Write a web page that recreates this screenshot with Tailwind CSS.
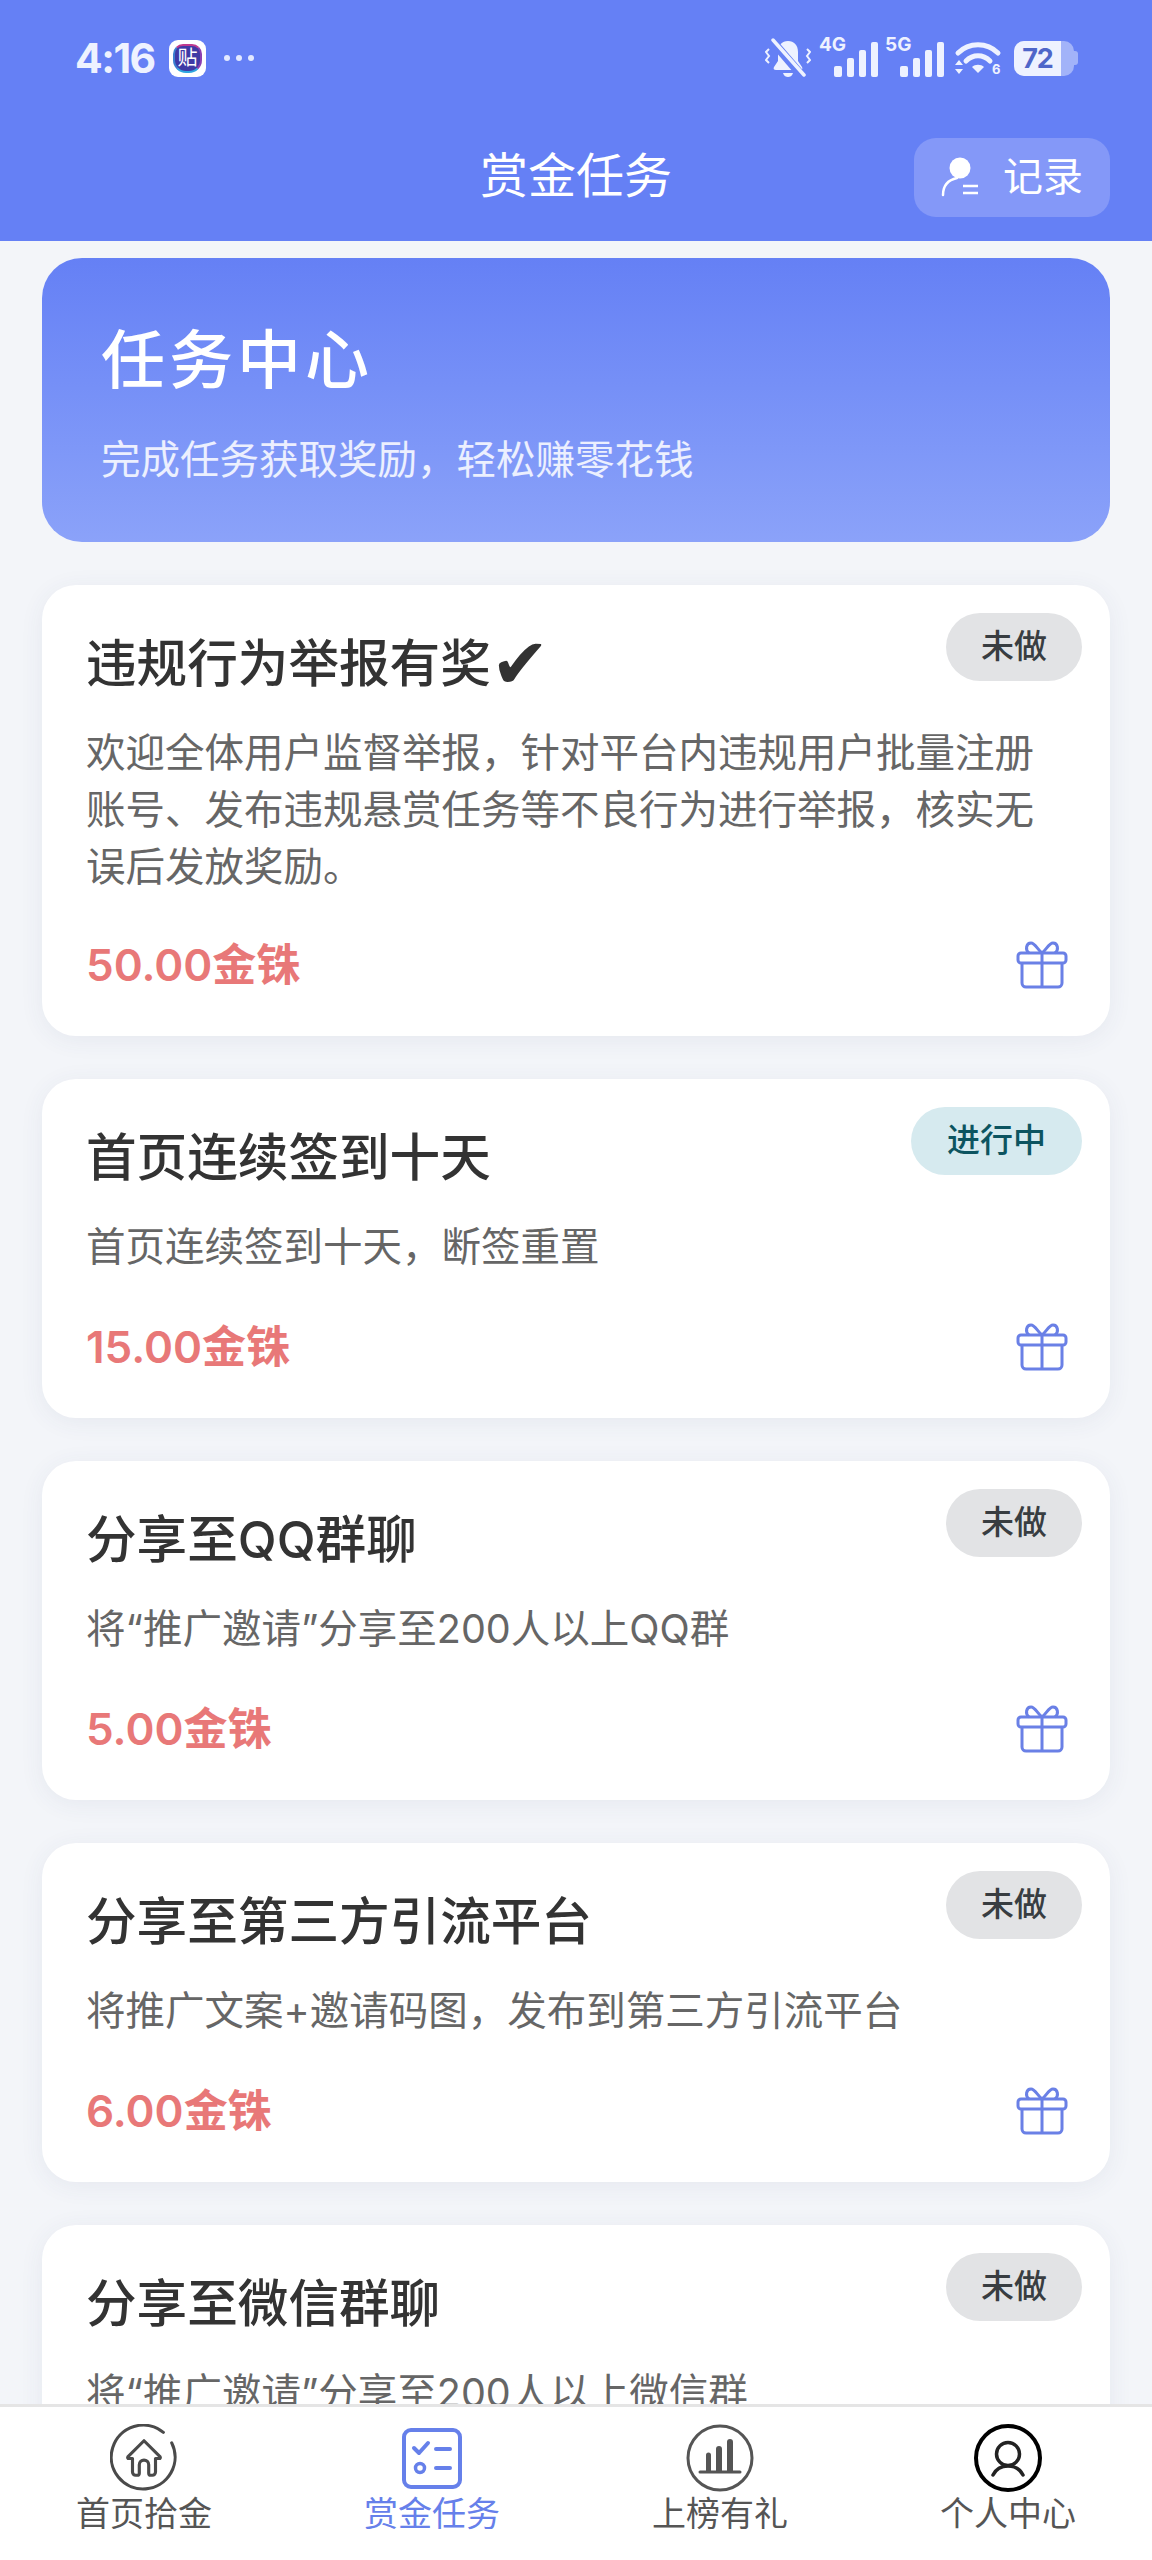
<!DOCTYPE html>
<html lang="zh-CN">
<head>
    <meta charset="UTF-8">
    <meta name="viewport" content="width=device-width, initial-scale=1.0">
    <title>赏金任务</title>
    <script src="https://cdn.jsdelivr.net/npm/@tailwindcss/browser@4"></script>
</head>
<body class="bg-[#f3f5f9] font-['Inter','Noto_Sans_CJK_SC',sans-serif]">
<div class="flex flex-col w-[1152px] h-[2560px] overflow-hidden">

    <!-- Header -->
    <header class="shrink-0 h-[241px] bg-[#6580f5] text-white">
        <!-- Status bar -->
        <div class="flex items-center justify-between h-[116px] pl-[75px] pr-[74px] text-[#eef2ff]">
            <div class="flex items-center">
                <span class="w-[78px] text-[41px] leading-none font-bold tracking-[-1.5px]">4:16</span>
                <span class="ml-[16px] flex items-center justify-center w-[37px] h-[37px] bg-white rounded-[9px]">
                    <span class="flex items-center justify-center w-[29px] h-[29px] rounded-t-[10px] rounded-b-[13px] bg-[#3f3aa5] border-2 border-t-[#c0398f] border-r-[#8b3fb0] border-b-[#2fa6e0] border-l-[#3a7fd0] text-[20px] leading-none text-white">贴</span>
                </span>
                <span class="ml-[18px] flex gap-[6px]">
                    <i class="block w-[6px] h-[6px] rounded-full bg-[#e3e9ff]"></i>
                    <i class="block w-[6px] h-[6px] rounded-full bg-[#e3e9ff]"></i>
                    <i class="block w-[6px] h-[6px] rounded-full bg-[#e3e9ff]"></i>
                </span>
            </div>
            <div class="flex items-center">
                <!-- muted bell -->
                <svg class="w-[46px] h-[40px]" viewBox="0 0 46 40" fill="none">
                    <path d="M13 23V14C13 7 17 3 23 3s10 4 10 11v9l4 6c1 2 0 3-2 3H11c-2 0-3-1-2-3z" fill="#eef2ff"/>
                    <path d="M18 35h10c-1 3-3 4-5 4s-4-1-5-4z" fill="#eef2ff"/>
                    <path d="M6 3l31 36" stroke="#6580f5" stroke-width="7"/>
                    <path d="M9 1l31 36" stroke="#6580f5" stroke-width="3"/>
                    <path d="M8 2l31 35" stroke="#eef2ff" stroke-width="3.500" stroke-linecap="round"/>
                    <path d="M4 11l-3 3 3 4-3 4 3 3M42 11l3 3-3 4 3 4-3 3" stroke="#eef2ff" stroke-width="2" fill="none"/>
                </svg>
                <!-- 4G signal -->
                <span class="relative ml-[8px] flex items-end gap-[5px] w-[59px] h-[38px] pl-[15px]">
                    <b class="absolute left-0 top-[-4px] text-[19px] leading-[20px] font-bold">4G</b>
                    <i class="block w-[8px] h-[11px] rounded-[2px] bg-[#eef2ff]"></i>
                    <i class="block w-[7px] h-[19px] rounded-[2px] bg-[#eef2ff]"></i>
                    <i class="block w-[7px] h-[27px] rounded-[2px] bg-[#eef2ff]"></i>
                    <i class="block w-[7px] h-[35px] rounded-[2px] bg-[#eef2ff]"></i>
                </span>
                <!-- 5G signal -->
                <span class="relative ml-[7px] flex items-end gap-[5px] w-[59px] h-[38px] pl-[15px]">
                    <b class="absolute left-0 top-[-4px] text-[19px] leading-[20px] font-bold">5G</b>
                    <i class="block w-[8px] h-[11px] rounded-[2px] bg-[#eef2ff]"></i>
                    <i class="block w-[7px] h-[19px] rounded-[2px] bg-[#eef2ff]"></i>
                    <i class="block w-[7px] h-[27px] rounded-[2px] bg-[#eef2ff]"></i>
                    <i class="block w-[7px] h-[35px] rounded-[2px] bg-[#eef2ff]"></i>
                </span>
                <!-- wifi -->
                <svg class="ml-[11px] w-[46px] h-[34px] overflow-visible" viewBox="0 0 46 34" fill="none">
                    <path d="M3 12C14 1 32 1 43 12" stroke="#eef2ff" stroke-width="5" stroke-linecap="round"/>
                    <path d="M11 20c7-7 17-7 24 0" stroke="#eef2ff" stroke-width="5" stroke-linecap="round"/>
                    <path d="M17 26c3-3 9-3 12 0l-6 6z" fill="#eef2ff"/>
                    <path d="M4 19l4 5H0zM4 33l4-5H0z" fill="#eef2ff"/>
                    <text x="37" y="33" font-size="13" font-weight="700" font-family="Inter" fill="#eef2ff">6</text>
                </svg>
                <!-- battery -->
                <span class="ml-[13px] flex items-center">
                    <span class="flex w-[60px] h-[35px] rounded-[10px] overflow-hidden bg-white/40">
                        <span class="flex items-center justify-center w-[47px] bg-[#eef2ff] text-[#4e66c9] text-[27px] leading-none font-bold tracking-[-1px]">72</span>
                    </span>
                    <i class="block w-[4px] h-[14px] rounded-r-[3px] bg-white/40"></i>
                </span>
            </div>
        </div>
        <!-- Title row -->
        <div class="grid grid-cols-[1fr_auto_1fr] items-center h-[125px] pb-[3px] px-[42px]">
            <span></span>
            <h1 class="text-[48px] leading-[64px] font-normal -mt-[2px]">赏金任务</h1>
            <div class="flex items-center justify-self-end justify-center gap-[24px] w-[196px] h-[79px] rounded-[22px] bg-[#8498f8]">
                <svg class="w-[38px] h-[40px]" viewBox="0 0 38 40" fill="none">
                    <circle cx="19" cy="11" r="10.500" fill="#fff"/>
                    <path d="M2 38c0-9 5-15 14-17" stroke="#fff" stroke-width="2.500" stroke-linecap="round"/>
                    <path d="M22 29h15M22 36h15" stroke="#fff" stroke-width="2.500"/>
                </svg>
                <span class="text-[40px] leading-[52px]">记录</span>
            </div>
        </div>
    </header>

    <!-- Task list -->
    <main class="flex-1 min-h-0 overflow-hidden px-[42px] pt-[17px]">
        <section class="h-[284px] rounded-[40px] bg-gradient-to-b from-[#6580f5] to-[#8ba2f9] pl-[59px] pt-[58px] text-white">
            <h2 class="text-[64px] leading-[88px] font-medium tracking-[4px]">任务中心</h2>
            <p class="mt-[28px] text-[39.500px] leading-[56px] text-white/85">完成任务获取奖励&#65292;轻松赚零花钱</p>
        </section>

        <div class="mt-[43px] flex flex-col gap-[43px]">
            <!-- card -->
            <article class="relative bg-white rounded-[34px] pl-[44px] pr-[42px] pt-[45px] pb-[41px] shadow-[0_4px_24px_rgba(60,70,110,0.07)]">
                <span class="absolute top-[28px] right-[28px] h-[68px] px-[35px] rounded-full bg-[#e2e3e5] text-[#383d41] text-[33px] font-medium leading-[66px]">未做</span>
                <h3 class="flex items-center h-[68px] text-[50.600px] leading-[68px] font-medium text-[#333]">违规行为举报有奖<span class="text-[70px] leading-none font-['DejaVu_Sans']">✔</span></h3>
                <p class="mt-[27px] text-[39.500px] leading-[57px] text-[#666]">欢迎全体用户监督举报&#65292;针对平台内违规用户批量注册账号、发布违规悬赏任务等不良行为进行举报&#65292;核实无误后发放奖励。</p>
                <div class="mt-[39px] flex items-center justify-between h-[60px]">
                    <span class="text-[44px] font-semibold text-[#e87878]">50.00金铢</span>
                    <svg class="w-[52px] h-[48px]" viewBox="0 0 52 48" fill="none" stroke="#6a80e6" stroke-width="3" stroke-linejoin="round"><rect x="2" y="12" width="48" height="10" rx="3"/><path d="M6 22v20a4 4 0 0 0 4 4h32a4 4 0 0 0 4-4V22M26 12v34M26 12c-4-3-7-10-11-10-5 0-6 7-2 10M26 12c4-3 7-10 11-10 5 0 6 7 2 10"/></svg>
                </div>
            </article>

            <article class="relative bg-white rounded-[34px] pl-[44px] pr-[42px] pt-[45px] pb-[41px] shadow-[0_4px_24px_rgba(60,70,110,0.07)]">
                <span class="absolute top-[28px] right-[28px] h-[68px] px-[36px] rounded-full bg-[#d6eaef] text-[#0c5460] text-[33px] font-medium leading-[66px]">进行中</span>
                <h3 class="h-[68px] text-[50.600px] leading-[68px] font-medium text-[#333]">首页连续签到十天</h3>
                <p class="mt-[27px] text-[39.500px] leading-[57px] text-[#666]">首页连续签到十天&#65292;断签重置</p>
                <div class="mt-[41px] flex items-center justify-between h-[60px]">
                    <span class="text-[44px] font-semibold text-[#e87878]">15.00金铢</span>
                    <svg class="w-[52px] h-[48px]" viewBox="0 0 52 48" fill="none" stroke="#6a80e6" stroke-width="3" stroke-linejoin="round"><rect x="2" y="12" width="48" height="10" rx="3"/><path d="M6 22v20a4 4 0 0 0 4 4h32a4 4 0 0 0 4-4V22M26 12v34M26 12c-4-3-7-10-11-10-5 0-6 7-2 10M26 12c4-3 7-10 11-10 5 0 6 7 2 10"/></svg>
                </div>
            </article>

            <article class="relative bg-white rounded-[34px] pl-[44px] pr-[42px] pt-[45px] pb-[41px] shadow-[0_4px_24px_rgba(60,70,110,0.07)]">
                <span class="absolute top-[28px] right-[28px] h-[68px] px-[35px] rounded-full bg-[#e2e3e5] text-[#383d41] text-[33px] font-medium leading-[66px]">未做</span>
                <h3 class="h-[68px] text-[50.600px] leading-[68px] font-medium text-[#333]">分享至QQ群聊</h3>
                <p class="mt-[27px] text-[39.500px] leading-[57px] text-[#666]">将“推广邀请”分享至200人以上QQ群</p>
                <div class="mt-[41px] flex items-center justify-between h-[60px]">
                    <span class="text-[44px] font-semibold text-[#e87878]">5.00金铢</span>
                    <svg class="w-[52px] h-[48px]" viewBox="0 0 52 48" fill="none" stroke="#6a80e6" stroke-width="3" stroke-linejoin="round"><rect x="2" y="12" width="48" height="10" rx="3"/><path d="M6 22v20a4 4 0 0 0 4 4h32a4 4 0 0 0 4-4V22M26 12v34M26 12c-4-3-7-10-11-10-5 0-6 7-2 10M26 12c4-3 7-10 11-10 5 0 6 7 2 10"/></svg>
                </div>
            </article>

            <article class="relative bg-white rounded-[34px] pl-[44px] pr-[42px] pt-[45px] pb-[41px] shadow-[0_4px_24px_rgba(60,70,110,0.07)]">
                <span class="absolute top-[28px] right-[28px] h-[68px] px-[35px] rounded-full bg-[#e2e3e5] text-[#383d41] text-[33px] font-medium leading-[66px]">未做</span>
                <h3 class="h-[68px] text-[50.600px] leading-[68px] font-medium text-[#333]">分享至第三方引流平台</h3>
                <p class="mt-[27px] text-[39.500px] leading-[57px] text-[#666]">将推广文案+邀请码图&#65292;发布到第三方引流平台</p>
                <div class="mt-[41px] flex items-center justify-between h-[60px]">
                    <span class="text-[44px] font-semibold text-[#e87878]">6.00金铢</span>
                    <svg class="w-[52px] h-[48px]" viewBox="0 0 52 48" fill="none" stroke="#6a80e6" stroke-width="3" stroke-linejoin="round"><rect x="2" y="12" width="48" height="10" rx="3"/><path d="M6 22v20a4 4 0 0 0 4 4h32a4 4 0 0 0 4-4V22M26 12v34M26 12c-4-3-7-10-11-10-5 0-6 7-2 10M26 12c4-3 7-10 11-10 5 0 6 7 2 10"/></svg>
                </div>
            </article>

            <article class="relative bg-white rounded-[34px] pl-[44px] pr-[42px] pt-[45px] pb-[41px] shadow-[0_4px_24px_rgba(60,70,110,0.07)]">
                <span class="absolute top-[28px] right-[28px] h-[68px] px-[35px] rounded-full bg-[#e2e3e5] text-[#383d41] text-[33px] font-medium leading-[66px]">未做</span>
                <h3 class="h-[68px] text-[50.600px] leading-[68px] font-medium text-[#333]">分享至微信群聊</h3>
                <p class="mt-[27px] text-[39.500px] leading-[57px] text-[#666]">将“推广邀请”分享至200人以上微信群</p>
            </article>
        </div>
    </main>

    <!-- Bottom tabs -->
    <nav class="shrink-0 grid grid-cols-4 h-[156px] bg-white border-t-[3px] border-[#e5e5e5] text-[34px] leading-[40px] text-[#555]">
        <div class="flex flex-col items-center pt-[17px]">
            <svg class="w-[68px] h-[68px]" viewBox="0 0 65 65" fill="none" stroke="#4a4a4a" stroke-width="3">
                <path d="M51 8A30.500 30.500 0 1 0 59 18" stroke-linecap="round"/>
                <path d="M32.500 16L48 31.500a1 1 0 0 1-1 1.500h-3.500V46a3 3 0 0 1-3 3H39a2 2 0 0 1-2-2v-8a4.500 4.500 0 0 0-9 0v8a2 2 0 0 1-2 2h-1.500a3 3 0 0 1-3-3V33H18a1 1 0 0 1-1-1.500z" stroke-linejoin="round"/>
            </svg>
            <span class="mt-[2px]">首页拾金</span>
        </div>
        <div class="flex flex-col items-center pt-[17px] text-[#6680ea]">
            <svg class="w-[68px] h-[68px]" viewBox="0 0 68 68" fill="none" stroke="#6680ea">
                <rect x="6" y="6" width="56" height="57" rx="7" stroke-width="4"/>
                <path d="M16 24l5 5 9-10" stroke-width="4" stroke-linecap="round" stroke-linejoin="round"/>
                <path d="M38 25h14M38 44h14" stroke-width="4" stroke-linecap="round"/>
                <circle cx="22" cy="44" r="4.500" stroke-width="3.500"/>
            </svg>
            <span class="mt-[2px]">赏金任务</span>
        </div>
        <div class="flex flex-col items-center pt-[17px]">
            <svg class="w-[68px] h-[68px]" viewBox="0 0 68 68" fill="none">
                <circle cx="34" cy="34" r="32" stroke="#555" stroke-width="3"/>
                <path d="M14 48h40" stroke="#555" stroke-width="3" stroke-linecap="round"/>
                <path d="M20 48V31a2.500 2.500 0 0 1 5 0v17zM30 48V25a3 3 0 0 1 6 0v23zM41 48V18a3 3 0 0 1 6 0v30z" fill="#555"/>
            </svg>
            <span class="mt-[2px]">上榜有礼</span>
        </div>
        <div class="flex flex-col items-center pt-[17px]">
            <svg class="w-[68px] h-[68px]" viewBox="0 0 68 68" fill="none">
                <circle cx="34" cy="34" r="32" stroke="#000" stroke-width="4"/>
                <circle cx="34" cy="30" r="11.500" stroke="#222" stroke-width="3.500"/>
                <path d="M19 51c3-6 9-9 15-9s12 3 15 9" stroke="#222" stroke-width="3.500" stroke-linecap="round"/>
            </svg>
            <span class="mt-[2px]">个人中心</span>
        </div>
    </nav>
</div>
</body>
</html>
